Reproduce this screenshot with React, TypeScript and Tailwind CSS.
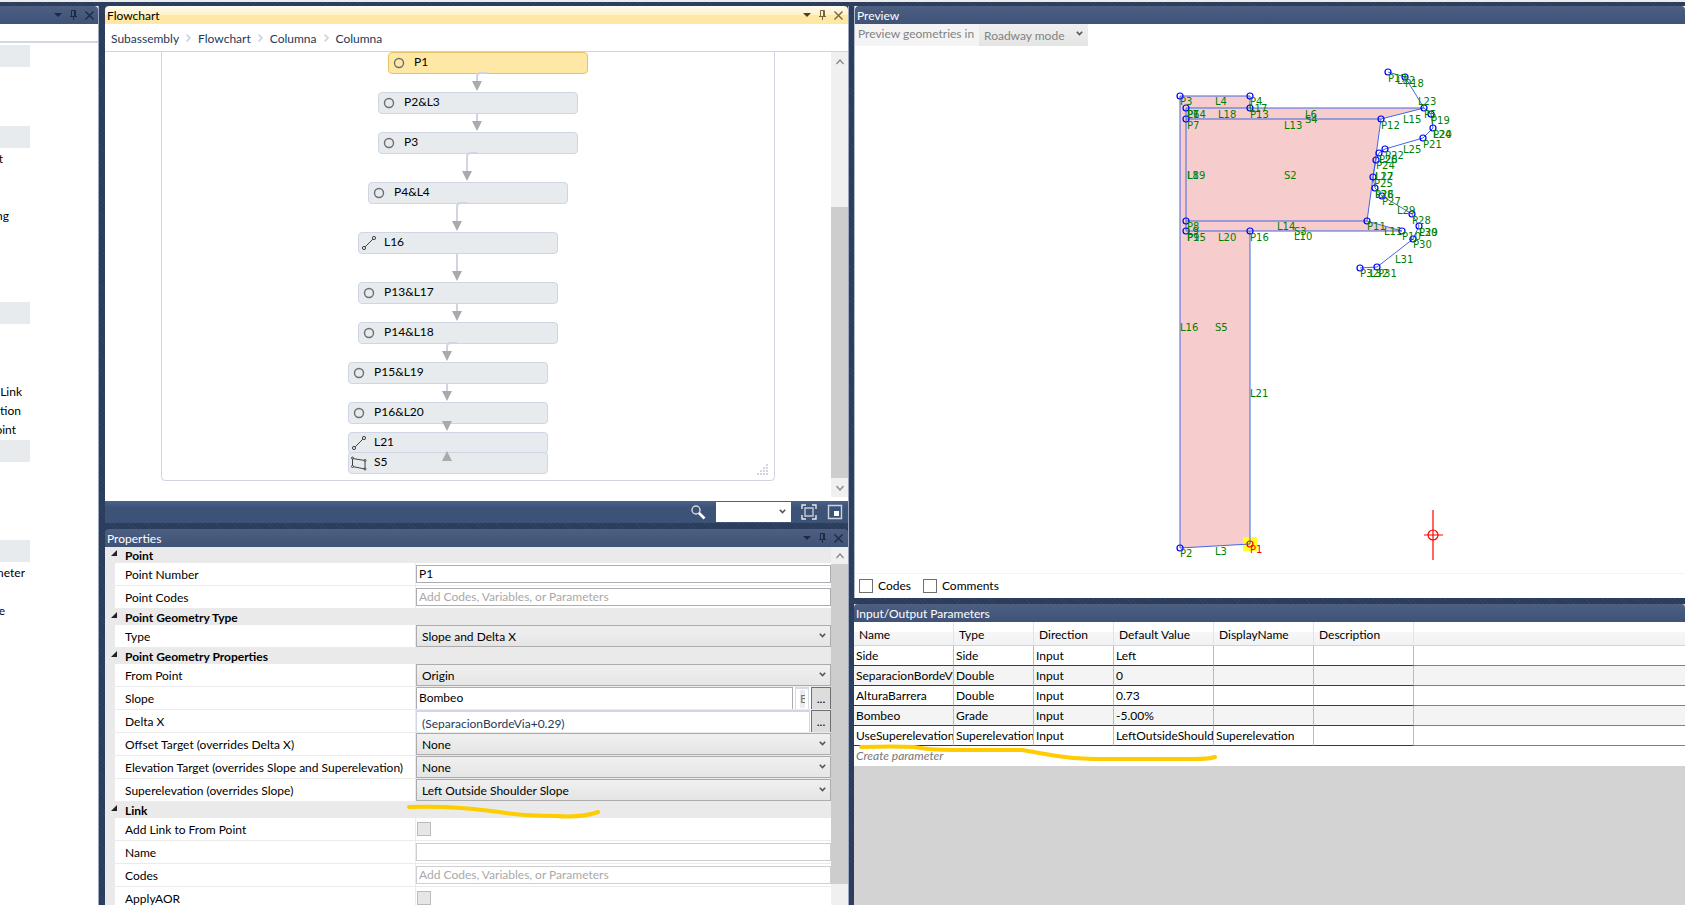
import type { ReactNode } from "react";

const STRIPES = "bg-[#2b3c5b] bg-[repeating-linear-gradient(45deg,#2b3c5b_0px,#2b3c5b_2px,#314362_2px,#314362_3px)]";

interface FlowNode {
    name: string;
    kind: "point" | "link" | "shape";
    x: number;
    y: number;
    selected?: boolean;
}

const flowNodes: FlowNode[] = [
    { name: "P1", kind: "point", x: 283, y: 0, selected: true },
    { name: "P2&L3", kind: "point", x: 273, y: 40 },
    { name: "P3", kind: "point", x: 273, y: 80 },
    { name: "P4&L4", kind: "point", x: 263, y: 130 },
    { name: "L16", kind: "link", x: 253, y: 180 },
    { name: "P13&L17", kind: "point", x: 253, y: 230 },
    { name: "P14&L18", kind: "point", x: 253, y: 270 },
    { name: "P15&L19", kind: "point", x: 243, y: 310 },
    { name: "P16&L20", kind: "point", x: 243, y: 350 },
    { name: "L21", kind: "link", x: 243, y: 380 },
    { name: "S5", kind: "shape", x: 243, y: 400 },
];

// x of the arrow, y of its tip, y where the line starts, and whether it bends in from the right
const connectors = [
    { x: 372, from: 21, tip: 39, bend: true },
    { x: 372, from: 62, tip: 79, bend: false },
    { x: 362, from: 101, tip: 129, bend: true },
    { x: 352, from: 151, tip: 179, bend: true },
    { x: 352, from: 202, tip: 229, bend: false },
    { x: 352, from: 252, tip: 269, bend: false },
    { x: 342, from: 291, tip: 309, bend: true },
    { x: 342, from: 332, tip: 349, bend: false },
    { x: 342, from: 369, tip: 379, bend: false },
];

const toolbox = [
    { items: ["", "", ""] },
    { items: ["t", "", "", "ng", "", "", "", ""] },
    { items: ["", "", "", "Link", "tion", "oint"] },
    { items: ["", "", "", ""] },
    { items: ["meter", "", "e"] },
];

const itemWidths: Record<string, string> = {
    t: "w-[3px]",
    ng: "w-[9px]",
    Link: "w-[22px]",
    tion: "w-[21px]",
    oint: "w-[16px]",
    meter: "w-[25px]",
    e: "w-[5px]",
};

const segments = [
    [1250, 544, 1180, 548], [1180, 548, 1180, 96], [1180, 96, 1250, 96], [1250, 96, 1250, 108],
    [1186, 108, 1424, 108], [1186, 119, 1381, 119], [1186, 108, 1186, 231], [1186, 221, 1367, 221],
    [1186, 231, 1402, 231], [1250, 231, 1250, 544], [1381, 119, 1367, 221], [1367, 221, 1402, 231],
    [1381, 119, 1424, 108], [1388, 72, 1405, 77], [1405, 77, 1424, 108], [1424, 108, 1431, 114],
    [1431, 114, 1433, 128], [1433, 128, 1423, 138], [1423, 138, 1385, 149], [1385, 149, 1379, 153],
    [1379, 153, 1376, 160], [1376, 160, 1373, 177], [1373, 177, 1375, 188], [1375, 188, 1382, 196],
    [1382, 196, 1412, 214], [1412, 214, 1419, 226], [1419, 226, 1413, 239], [1413, 239, 1377, 267],
    [1377, 267, 1360, 268],
];

const points = [
    [1180, 548], [1180, 96], [1250, 96], [1186, 108], [1250, 108], [1186, 119], [1381, 119],
    [1186, 221], [1186, 231], [1250, 231], [1367, 221], [1402, 231], [1424, 108], [1388, 72],
    [1405, 77], [1431, 114], [1433, 128], [1423, 138], [1385, 149], [1379, 153], [1376, 160],
    [1373, 177], [1375, 188], [1382, 196], [1412, 214], [1419, 226], [1413, 239], [1377, 267],
    [1360, 268],
];

const labels: [string, number, number][] = [
    ["P3", 1180, 105], ["L4", 1215, 105], ["P4", 1250, 105], ["L17", 1249, 112], ["P6", 1187, 118],
    ["P14", 1187, 118], ["L7", 1187, 118], ["L18", 1218, 118], ["P13", 1250, 118], ["L6", 1305, 118],
    ["S4", 1305, 123], ["P7", 1187, 129], ["L13", 1284, 129], ["P12", 1381, 129], ["L8", 1187, 179],
    ["L19", 1187, 179], ["S2", 1284, 179], ["P8", 1187, 230], ["L9", 1187, 235], ["P15", 1187, 241],
    ["P9", 1187, 241], ["L20", 1218, 241], ["P16", 1250, 241], ["L14", 1277, 230], ["S3", 1294, 235],
    ["L10", 1294, 240], ["P11", 1367, 230], ["L11", 1384, 235], ["P10", 1402, 240], ["P17", 1388, 82],
    ["L22", 1397, 84], ["P18", 1405, 87], ["L23", 1418, 105], ["P5", 1424, 118], ["P19", 1431, 124],
    ["P20", 1433, 138], ["L24", 1433, 138], ["P21", 1423, 148], ["L15", 1403, 123], ["L25", 1403, 153],
    ["P22", 1385, 159], ["P23", 1379, 163], ["L26", 1379, 163], ["P24", 1376, 169], ["L27", 1375, 180],
    ["L12", 1375, 180], ["P25", 1374, 187], ["P26", 1375, 198], ["L28", 1375, 198], ["P27", 1382, 205],
    ["L29", 1397, 214], ["P28", 1412, 224], ["P29", 1419, 236], ["L30", 1419, 236], ["P30", 1413, 248],
    ["L31", 1395, 263], ["P31", 1378, 277], ["L32", 1370, 277], ["P32", 1360, 277], ["L16", 1180, 331],
    ["S5", 1215, 331], ["L21", 1250, 397], ["P2", 1180, 557], ["L3", 1215, 555],
];

const parameters = [
    ["Side", "Side", "Input", "Left", "", ""],
    ["SeparacionBordeVia", "Double", "Input", "0", "", ""],
    ["AlturaBarrera", "Double", "Input", "0.73", "", ""],
    ["Bombeo", "Grade", "Input", "-5.00%", "", ""],
    ["UseSuperelevation", "Superelevation", "Input", "LeftOutsideShoulder", "Superelevation", ""],
];

function WindowButtons({ active = false }: { active?: boolean }) {
    return (
        <div className={`flex items-center gap-2 ${active ? "text-[#75663f]" : "text-[#1c2a44]"}`}>
            <button aria-label="Window menu">
                <svg width="8" height="4" viewBox="0 0 8 4" className={active ? "text-[#4a3f22]" : ""}>
                    <path d="M0 0h8L4 4z" fill="currentColor" />
                </svg>
            </button>
            <button aria-label="Auto hide">
                <svg width="7" height="10" viewBox="0 0 7 10" fill="none" stroke="currentColor">
                    <path d="M1.5 6V.5h4V6M4.5 1v5M0 6.5h7M3.5 7v3" />
                </svg>
            </button>
            <button aria-label="Close">
                <svg width="9" height="9" viewBox="0 0 9 9" fill="none" stroke="currentColor" strokeWidth="1.4">
                    <path d="M.5.5l8 8M8.5.5l-8 8" />
                </svg>
            </button>
        </div>
    );
}

function TitleBar({ title, active = false, buttons = true }: { title: string; active?: boolean; buttons?: boolean }) {
    const look = active
        ? "bg-[linear-gradient(#fffcf3_0%,#fff0c4_50%,#ffe8a6_50%,#ffe8a6_100%)] text-black"
        : "bg-linear-to-b from-[#4d6082] to-[#3f5277] text-white";
    return (
        <div className={`flex h-[18px] shrink-0 items-center justify-between rounded-t-sm pl-0.5 pr-[5px] ${look}`}>
            <h2 className="pt-0.5 text-[12px] leading-4">{title}</h2>
            {buttons && <WindowButtons active={active} />}
        </div>
    );
}

function Chevron({ className = "", up = false }: { className?: string; up?: boolean }) {
    return (
        <svg width="8" height="6" viewBox="0 0 8 6" fill="none" stroke="currentColor" strokeWidth="1.4" className={className}>
            <path d={up ? "M.5 5L4 1l3.5 4" : "M.5 1L4 5l3.5-4"} />
        </svg>
    );
}

function DropArrow({ className }: { className: string }) {
    return (
        <svg width="7" height="5" viewBox="0 0 7 5" fill="none" stroke="#555" strokeWidth="1.6" className={`pointer-events-none absolute ${className}`}>
            <path d="M.8.8l2.7 2.7L6.2.8" />
        </svg>
    );
}

function NodeIcon({ kind }: { kind: FlowNode["kind"] }) {
    if (kind === "point") {
        return (
            <svg width="16" height="16" viewBox="0 0 16 16">
                <circle cx="7" cy="8" r="4.5" fill="none" stroke="#6e6e72" strokeWidth="1.4" />
            </svg>
        );
    }
    if (kind === "link") {
        return (
            <svg width="16" height="16" viewBox="0 0 16 16" fill="none" stroke="#404040">
                <circle cx="2" cy="13" r="1.6" />
                <circle cx="12" cy="3" r="1.6" />
                <path d="M3.2 11.8l7.6-7.6" />
            </svg>
        );
    }
    return (
        <svg width="16" height="16" viewBox="0 0 16 16" fill="#e8ebee" stroke="#404040" className="overflow-visible">
            <path d="M.5 3.5l12.5 2v8.500l-12.500-2.500z" />
            <circle cx=".5" cy="3" r="1" />
            <circle cx="13" cy="5.500" r="1" />
            <circle cx="13" cy="14" r="1" />
            <circle cx=".5" cy="11.500" r="1" />
        </svg>
    );
}

function Toolbox() {
    return (
        <aside className="mr-1.5 flex w-[99px] shrink-0 flex-col border-r border-[#9aa7bf] bg-white">
            <div className="flex h-[18px] shrink-0 items-center justify-end rounded-tr-sm bg-linear-to-b from-[#4d6082] to-[#3f5277] pr-1">
                <WindowButtons />
            </div>
            <div className="mb-0.5 h-[19px] shrink-0 border-b-2 border-[#d3d7e2]" />
            {toolbox.map((group, g) => (
                <section key={g} className="pb-0.5">
                    <div className="h-[22px] w-[30px] bg-[#e7ebee]" />
                    <ul>
                        {group.items.map((item, i) => (
                            <li key={i} className={`flex h-[19px] items-center justify-end overflow-hidden whitespace-nowrap pt-0.5 ${itemWidths[item] ?? ""}`}>
                                {item}
                            </li>
                        ))}
                    </ul>
                </section>
            ))}
        </aside>
    );
}

function FlowCanvas() {
    return (
        <div className="relative h-[449px] shrink-0 overflow-hidden bg-white">
            <div className="absolute -top-2 left-14 h-[437px] w-[614px] rounded-sm border border-[#d0d4e2]" />
            {flowNodes.map((node) => (
                <div
                    key={node.name}
                    className={`absolute flex h-[22px] w-[200px] items-center gap-1.5 rounded-sm border pl-[3px] ${node.selected ? "border-[#e5c365] bg-[#ffe8a6]" : "border-[#cfd5e5] bg-[#e7ebee]"}`}
                    style={{ left: node.x, top: node.y }}
                >
                    <NodeIcon kind={node.kind} />
                    <span className="pb-0.5 leading-4">{node.name}</span>
                </div>
            ))}
            <svg className="absolute inset-0 h-full w-full" fill="none">
                {connectors.map((c) => (
                    <g key={c.tip}>
                        {c.tip - c.from > 10 && (
                            <path
                                d={c.bend ? `M${c.x + 10} ${c.from}h-6q-4 0 -4 4V${c.tip - 9}` : `M${c.x} ${c.from}V${c.tip - 9}`}
                                stroke="#cfd5e5"
                                strokeWidth="2"
                            />
                        )}
                        <path d={`M${c.x - 5} ${c.tip - 10}h10l-5 10z`} fill="#aaaaaa" />
                    </g>
                ))}
                <path d="M337 409h10l-5 -10z" fill="#aaaaaa" />
                <g fill="#d3d6de">
                    {[0, 1, 2, 3].map((row) =>
                        Array.from({ length: row + 1 }, (_, i) => (
                            <rect key={`${row}-${i}`} x={661 - i * 3} y={412 + row * 3} width="2" height="2" />
                        ))
                    )}
                </g>
            </svg>
            <div className="absolute right-0 top-0 flex h-[445px] w-[17px] flex-col items-center bg-[#f0f0f0] text-[#8a8a8a]">
                <button aria-label="Scroll up" className="flex h-[19px] items-center"><Chevron up /></button>
                <div className="mt-34 w-full flex-1 bg-[#cdcdcd]" />
                <button aria-label="Scroll down" className="flex h-[19px] items-center"><Chevron /></button>
            </div>
        </div>
    );
}

function Flowchart() {
    const crumbs = ["Subassembly", "Flowchart", "Columna", "Columna"];
    return (
        <section className="flex shrink-0 flex-col">
            <TitleBar title="Flowchart" active />
            <nav className="flex h-7 items-center gap-[7px] border-b border-[#d0d4e2] bg-white pl-1.5 text-[#1e395b]">
                {crumbs.map((crumb, i) => (
                    <span key={i} className="flex items-center gap-[7px]">
                        {i > 0 && (
                            <svg width="5" height="8" viewBox="0 0 5 8" fill="none" stroke="#cfd5e2" strokeWidth="1.8">
                                <path d="M.5.5L4 4 .5 7.5" />
                            </svg>
                        )}
                        <a href="#" className="pt-0.5">{crumb}</a>
                    </span>
                ))}
            </nav>
            <FlowCanvas />
            <div className="flex h-[22px] items-center justify-end bg-linear-to-b from-[#4a628a] to-[#3d5277] to-30% pr-[5px]">
                <button aria-label="Search" className="mr-2.5">
                    <svg width="15" height="15" viewBox="0 0 15 15" fill="none">
                        <circle cx="5" cy="5" r="4" stroke="#d5d9e0" strokeWidth="1.4" />
                        <path d="M8 8l5.5 5.5" stroke="#fff" strokeWidth="2.6" />
                    </svg>
                </button>
                <div className="relative mr-2.5 flex">
                    <select aria-label="Zoom" className="h-5 w-[75px] appearance-none bg-white" />
                    <DropArrow className="right-[5px] top-[7px]" />
                </div>
                <button aria-label="Fit to screen" className="mr-2.5">
                    <svg width="16" height="16" viewBox="0 0 16 16" fill="none" stroke="#e6e9ee" strokeWidth="1.4">
                        <path d="M1 5V1h4M11 1h4v4M15 11v4h-4M5 15H1v-4" />
                        <path d="M4 4h8v8H4z" stroke="#c5cad3" />
                    </svg>
                </button>
                <button aria-label="Overview">
                    <svg width="16" height="16" viewBox="0 0 16 16" fill="none">
                        <path d="M1.5 1.5h13v13h-13z" stroke="#cfd4dc" strokeWidth="1.4" />
                        <path d="M7 7h5v5H7z" fill="#fff" />
                    </svg>
                </button>
            </div>
        </section>
    );
}

function Group({ title, children }: { title: string; children: ReactNode }) {
    return (
        <fieldset className="min-w-0">
            <legend className="flex h-4 w-full items-center gap-2 bg-[#eaeaea] pl-1.5">
                <svg width="6" height="6" viewBox="0 0 6 6" className="mb-1">
                    <path d="M6 0v6H0z" fill="#222" />
                </svg>
                <span className="pt-0.5 font-bold leading-4">{title}</span>
            </legend>
            <div className="ml-2.5 bg-white">{children}</div>
        </fieldset>
    );
}

function Row({ label, id, children }: { label: string; id: string; children: ReactNode }) {
    return (
        <div className="flex h-[23px] border-b border-[#ebebeb]">
            <label htmlFor={id} className="flex w-[301px] shrink-0 items-center whitespace-nowrap border-r border-[#ebebeb] pl-2.5 pt-0.5">
                {label}
            </label>
            <div className="flex min-w-0 flex-1 items-center">{children}</div>
        </div>
    );
}

function TextRow({ label, id, value, faint = false }: { label: string; id: string; value?: string; faint?: boolean }) {
    return (
        <Row label={label} id={id}>
            <input
                id={id}
                type="text"
                defaultValue={value}
                placeholder={value === undefined ? "Add Codes, Variables, or Parameters" : ""}
                className={`h-[18px] w-full border px-0.5 placeholder:text-[#a9a9a9] ${faint ? "border-[#cfcfd2]" : "border-[#abadb3]"}`}
            />
        </Row>
    );
}

function SelectRow({ label, id, value }: { label: string; id: string; value: string }) {
    return (
        <Row label={label} id={id}>
            <div className="relative flex w-full">
                <select id={id} className="h-[22px] w-full appearance-none border border-[#acacac] bg-linear-to-b from-[#f0f0f0] to-[#e5e5e5] px-[5px] pt-0.5">
                    <option>{value}</option>
                </select>
                <DropArrow className="right-[5px] top-2" />
            </div>
        </Row>
    );
}

function CheckRow({ label, id }: { label: string; id: string }) {
    return (
        <Row label={label} id={id}>
            <input id={id} type="checkbox" className="ml-px size-3.5 appearance-none border border-[#bcbcbc] bg-[#e6e6e6]" />
        </Row>
    );
}

function MoreButton() {
    return (
        <button className="h-full w-5 shrink-0 border border-b-0 border-[#707070] bg-[#dddddd] leading-5" aria-label="Edit expression">
            ...
        </button>
    );
}

function Properties() {
    return (
        <section className="relative flex min-h-0 flex-1 flex-col">
            <TitleBar title="Properties" />
            <div className="flex min-h-0 flex-1 overflow-hidden bg-[#eaeaea]">
                <form className="min-w-0 flex-1">
                    <Group title="Point">
                        <TextRow label="Point Number" id="number" value="P1" />
                        <TextRow label="Point Codes" id="codes" />
                    </Group>
                    <Group title="Point Geometry Type">
                        <SelectRow label="Type" id="type" value="Slope and Delta X" />
                    </Group>
                    <Group title="Point Geometry Properties">
                        <SelectRow label="From Point" id="from" value="Origin" />
                        <Row label="Slope" id="slope">
                            <input id="slope" type="text" defaultValue="Bombeo" className="h-full min-w-0 flex-1 border border-b-0 border-[#abadb3] px-0.5 pb-0.5" />
                            <span className="mx-0.5 flex h-full w-3.5 shrink-0 items-center overflow-hidden border-x border-t-2 border-[#d5dae8] pl-1 text-[#777]">
                                <span className="w-[5px] overflow-hidden bg-[#ececec]">B</span>
                            </span>
                            <MoreButton />
                        </Row>
                        <Row label="Delta X" id="delta">
                            <input id="delta" type="text" defaultValue="(SeparacionBordeVia+0.29)" className="mr-px h-full min-w-0 flex-1 border-x border-t-2 border-[#d0d6e6] px-[5px] pt-0.5 text-[#1e395b]" />
                            <MoreButton />
                        </Row>
                        <SelectRow label="Offset Target (overrides Delta X)" id="offset" value="None" />
                        <SelectRow label="Elevation Target (overrides Slope and Superelevation)" id="elevation" value="None" />
                        <SelectRow label="Superelevation (overrides Slope)" id="superelevation" value="Left Outside Shoulder Slope" />
                    </Group>
                    <Group title="Link">
                        <CheckRow label="Add Link to From Point" id="add-link" />
                        <TextRow label="Name" id="link-name" value="" faint />
                        <TextRow label="Codes" id="link-codes" faint />
                        <CheckRow label="ApplyAOR" id="apply-aor" />
                    </Group>
                </form>
                <div className="flex w-[17px] shrink-0 flex-col items-center bg-[#f0f0f0] text-[#8a8a8a]">
                    <button aria-label="Scroll up" className="flex h-[17px] items-center"><Chevron up /></button>
                    <div className="mb-[21px] w-full flex-1 bg-[#cdcdcd]" />
                </div>
            </div>
            {/* marker stroke under the superelevation row */}
            <svg className="pointer-events-none absolute left-[301px] top-[272px]" width="198" height="20" fill="none">
                <path d="M3 6Q30 5 55 7T100 12T150 15Q175 17 192 11" stroke="#ffcc00" strokeWidth="4" strokeLinecap="round" />
            </svg>
        </section>
    );
}

function Drawing() {
    return (
        <svg className="h-full w-full" fill="none">
            <g transform="translate(-855 -46)">
                <path d="M1180 548V96H1250V108H1424L1381 119L1367 221L1402 231H1250V544Z" fill="#f7cccc" />
                <rect x="1243" y="537" width="14" height="14" fill="#ffff20" />
                <g stroke="#4169e1">
                    {segments.map(([x1, y1, x2, y2], i) => (
                        <line key={i} x1={x1} y1={y1} x2={x2} y2={y2} />
                    ))}
                </g>
                <g stroke="#0000ff" strokeWidth="1.2">
                    {points.map(([cx, cy], i) => (
                        <circle key={i} cx={cx} cy={cy} r="3" />
                    ))}
                </g>
                <g fill="#008000" className="font-['DejaVu_Sans',sans-serif] text-[10px]">
                    {labels.map(([text, x, y]) => (
                        <text key={text} x={x} y={y}>{text}</text>
                    ))}
                    <text x="1250" y="553" fill="#ff0000">P1</text>
                </g>
                <g stroke="#ff0000" strokeWidth="1.2">
                    <circle cx="1250" cy="544" r="3" />
                    <circle cx="1433" cy="535" r="5" />
                    <path d="M1433 510v50M1424 535h19" />
                </g>
            </g>
        </svg>
    );
}

function Preview() {
    return (
        <section className="flex h-[592px] shrink-0 flex-col border-l border-[#b4bccb] bg-white">
            <TitleBar title="Preview" buttons={false} />
            <div className="flex h-[22px] w-[233px] shrink-0 bg-[#f4f4f4] text-[#838383]">
                <label htmlFor="mode" className="w-[124px] shrink-0 whitespace-nowrap pl-[3px] leading-5">
                    Preview geometries in
                </label>
                <div className="relative flex flex-1">
                    <select id="mode" disabled className="w-full appearance-none bg-linear-to-b from-[#f0f0f0] to-[#e5e5e5] px-[5px] pt-0.5">
                        <option>Roadway mode</option>
                    </select>
                    <DropArrow className="right-[5px] top-[7px]" />
                </div>
            </div>
            <div className="min-h-0 flex-1">
                <Drawing />
            </div>
            <div className="flex h-[25px] shrink-0 items-center gap-3 border-t border-[#f3f3f3] pl-1">
                {["Codes", "Comments"].map((name) => (
                    <label key={name} className="flex items-center gap-[5px]">
                        <input type="checkbox" className="size-3.5 appearance-none border border-[#707070] bg-white" />
                        {name}
                    </label>
                ))}
            </div>
        </section>
    );
}

function Parameters() {
    const headers = ["Name", "Type", "Direction", "Default Value", "DisplayName", "Description"];
    const widths = ["w-[100px]", "w-20", "w-20", "w-[100px]", "w-[100px]", "w-[100px]"];
    return (
        <section className="relative flex min-h-0 flex-1 flex-col bg-[#d3d3d3]">
            <TitleBar title="Input/Output Parameters" buttons={false} />
            <table className="w-full table-fixed border-separate border-spacing-0 bg-white">
                <thead>
                    <tr className="h-6 bg-[linear-gradient(#ffffff_0%,#ffffff_40%,#f6f7f8_40%,#f1f2f4_100%)] text-left">
                        {headers.map((name, i) => (
                            <th key={name} className={`border-b border-r border-b-[#d5d5d5] border-r-[#e3e4e6] p-0 pl-[5px] pt-0.5 font-normal ${widths[i]}`}>
                                {name}
                            </th>
                        ))}
                        <th className="border-b border-[#d5d5d5] p-0" />
                    </tr>
                </thead>
                <tbody>
                    {parameters.map((row, r) => (
                        <tr key={row[0]} className={`h-5 ${r % 2 ? "bg-[#f4f4f4]" : "bg-white"}`}>
                            {row.map((cell, i) => (
                                <td key={i} className="overflow-hidden whitespace-nowrap border-b border-r border-b-[#3a3a3a] border-r-[#bcbcbc] p-0 pl-0.5 leading-[19px]">
                                    {cell}
                                </td>
                            ))}
                            <td className="border-b border-[#808080] p-0" />
                        </tr>
                    ))}
                </tbody>
            </table>
            <button className="h-5 bg-white pl-0.5 text-left italic text-[#777]">Create parameter</button>
            {/* marker stroke under the last parameter */}
            <svg className="pointer-events-none absolute left-0 top-[136px]" width="370" height="24" fill="none">
                <path d="M7 7Q40 6 60 7Q75 10 98 10H168Q185 13 203 16T240 19H340Q355 19 361 17" stroke="#ffcc00" strokeWidth="4" strokeLinecap="round" />
            </svg>
        </section>
    );
}

export default function App() {
    return (
        <div className={`flex h-screen flex-col overflow-hidden border-t-2 border-[#ececec] pt-1 font-['Lato','Open_Sans',sans-serif] text-[12px] text-black ${STRIPES}`}>
            <div className="flex min-h-0 flex-1">
                <Toolbox />
                <main className="mr-[5px] flex w-[744px] shrink-0 flex-col gap-1.5 border-r border-[#9aa7bf]">
                    <Flowchart />
                    <Properties />
                </main>
                <div className="flex min-w-0 flex-1 flex-col gap-1.5">
                    <Preview />
                    <Parameters />
                </div>
            </div>
        </div>
    );
}
